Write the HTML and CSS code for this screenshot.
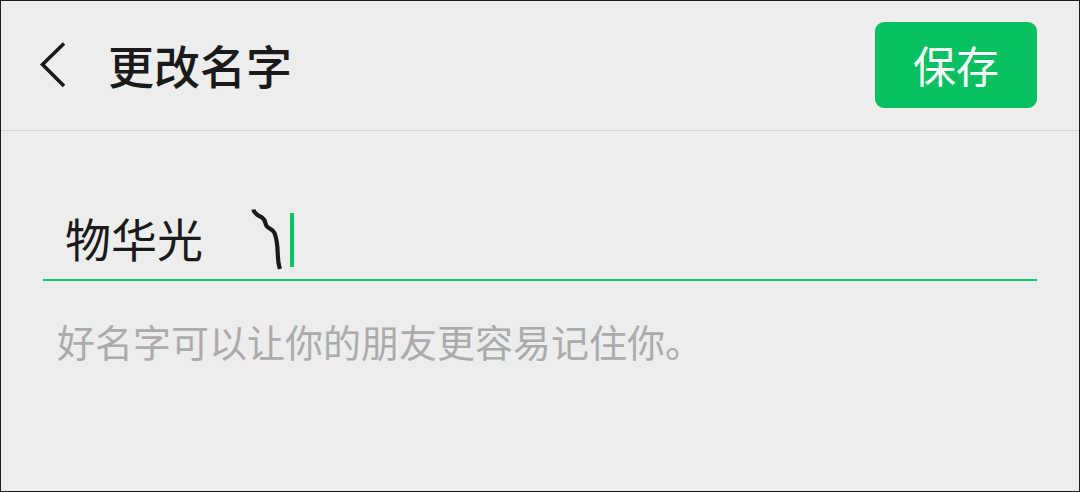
FILE: index.html
```html
<!DOCTYPE html>
<html lang="zh-CN">
<head>
<meta charset="utf-8">
<title>更改名字</title>
<link rel="stylesheet" href="styles.css">
</head>
<body>
<main class="screen">
  <header class="topbar">
    <div class="topbar-left">
      <svg class="back" width="30" height="48" viewBox="0 0 30 48" aria-hidden="true"><path d="M26 2.500 L4.500 23.500 L26 45" fill="none" stroke="#1a1a1a" stroke-width="3.600" stroke-linejoin="miter"/></svg>
      <h1 class="title">更改名字</h1>
    </div>
    <button class="save">保存</button>
  </header>
  <section class="form">
    <div class="field">
      <span class="name">物华光</span>
      <svg class="squiggle" width="32" height="62" viewBox="0 0 32 62" aria-hidden="true"><path d="M3.500 0.500 C4 5 8 6 12 8.500 C16.500 11.500 14.500 15 17 17.500 C19 20 22.500 19.500 24.500 24 C27 30 27.600 38 27.800 46 C28 52 28.600 56 29.800 60" fill="none" stroke="#1a1a1a" stroke-width="4.200" stroke-linecap="butt"/></svg>
      <span class="caret"></span>
    </div>
    <p class="hint">好名字可以让你的朋友更容易记住你。</p>
  </section>
</main>
</body>
</html>
```
FILE: styles.css
```css
* { box-sizing: border-box; }
html, body { margin: 0; padding: 0; }
body {
  width: 1080px;
  height: 492px;
  overflow: hidden;
  font-family: "Noto Sans CJK SC", "Noto Sans", sans-serif;
}
.screen {
  width: 1080px;
  height: 492px;
  background: #ededed;
  border: 1px solid #1c1c1c;
  display: flex;
  flex-direction: column;
}
.topbar {
  height: 130px;
  flex: none;
  border-bottom: 1px solid #d5d5d5;
  display: flex;
  align-items: center;
  justify-content: space-between;
  padding: 0 42px 2px 37px;
}
.topbar-left { display: flex; align-items: center; gap: 40px; }
.back { display: block; }
.title {
  margin: 0 0 2px;
  font-size: 46px;
  font-weight: 500;
  line-height: 60px;
  color: #1a1a1a;
}
.save {
  width: 162px;
  height: 86px;
  border: 0;
  border-radius: 9px;
  background: #07c160;
  color: #fff;
  font-family: inherit;
  font-size: 43px;
  font-weight: 400;
  padding: 0 0 2px;
}
.form { padding: 78px 42px 0; }
.field {
  height: 72px;
  border-bottom: 2px solid #12c574;
  display: flex;
  align-items: flex-start;
  padding-left: 22px;
}
.name {
  font-size: 46px;
  line-height: 60px;
  margin-top: -2px;
  color: #1a1a1a;
  width: 185px;
  flex: none;
}
.squiggle { display: block; flex: none; }
.caret {
  width: 4px;
  height: 54px;
  margin-top: 4px;
  margin-left: 8px;
  background: #07c160;
  flex: none;
}
.hint {
  margin: 35px 0 0 14px;
  font-size: 38px;
  line-height: 50px;
  color: #ababab;
}
```
